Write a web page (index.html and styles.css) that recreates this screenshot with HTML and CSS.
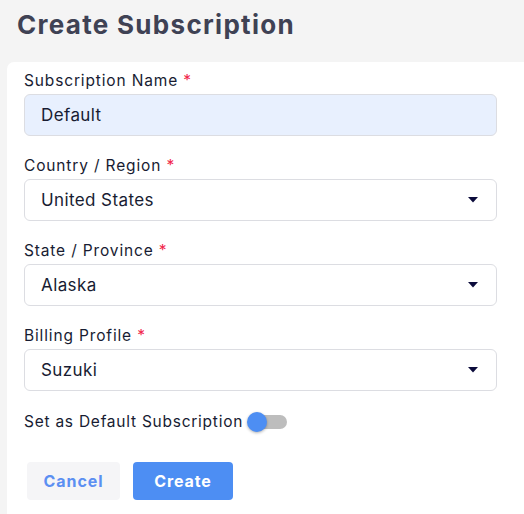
FILE: index.html
```html
<!DOCTYPE html>
<html>
<head>
<meta charset="utf-8">
<link rel="stylesheet" href="styles.css">
</head>
<body>
<header class="page-head">
  <h1 class="title">Create Subscription</h1>
</header>
<main class="card">
  <div class="field">
    <label class="label">Subscription Name <span class="req">*</span></label>
    <div class="input filled">Default</div>
  </div>
  <div class="field">
    <label class="label">Country / Region <span class="req">*</span></label>
    <div class="input select"><span>United States</span><svg class="caret" width="10" height="6" viewBox="0 0 10 6"><path d="M0 0H10L5 5.5Z" fill="#0b0b3b"/></svg></div>
  </div>
  <div class="field">
    <label class="label">State / Province <span class="req">*</span></label>
    <div class="input select"><span>Alaska</span><svg class="caret" width="10" height="6" viewBox="0 0 10 6"><path d="M0 0H10L5 5.5Z" fill="#0b0b3b"/></svg></div>
  </div>
  <div class="field">
    <label class="label">Billing Profile <span class="req">*</span></label>
    <div class="input select"><span>Suzuki</span><svg class="caret" width="10" height="6" viewBox="0 0 10 6"><path d="M0 0H10L5 5.5Z" fill="#0b0b3b"/></svg></div>
  </div>
  <div class="toggle-row">
    <span class="label toggle-label">Set as Default Subscription</span>
    <span class="switch"><span class="track"></span><span class="knob"></span></span>
  </div>
  <div class="actions">
    <button class="btn btn-cancel">Cancel</button>
    <button class="btn btn-create">Create</button>
  </div>
</main>
</body>
</html>
```
FILE: styles.css
```css
html, body {
  margin: 0;
  padding: 0;
}
body {
  background: #f4f4f4;
  font-family: Inter, "Open Sans", sans-serif;
  color: #181c32;
  width: 524px;
  height: 514px;
  overflow: hidden;
}
.page-head {
  height: 62px;
  padding-left: 17px;
  box-sizing: border-box;
}
.title {
  margin: 0;
  padding-top: 7px;
  font-size: 26px;
  line-height: 36px;
  font-weight: 700;
  color: #3f4254;
  letter-spacing: 1.3px;
}
.card {
  margin-left: 7px;
  background: #fff;
  border-top-left-radius: 7px;
  padding: 8px 27px 20px 17px;
  height: 460px;
  box-sizing: border-box;
}
.field {
  display: flex;
  flex-direction: column;
  margin-bottom: 19px;
}
.label {
  font-size: 15.5px;
  line-height: 22px;
  letter-spacing: 0.85px;
  color: #181c32;
  margin-bottom: 2px;
}
.req {
  color: #f1254a;
}
.input {
  height: 42px;
  box-sizing: border-box;
  border: 1px solid #dcdde2;
  border-radius: 6px;
  padding: 0 16px;
  display: flex;
  align-items: center;
  font-size: 17px;
  letter-spacing: 0.4px;
  color: #181c32;
}
.input.filled {
  background: #e8f0fe;
}
.select {
  justify-content: space-between;
}
.caret {
  margin-right: 2px;
}
.toggle-row {
  display: flex;
  align-items: center;
  height: 24px;
  margin-top: 3px;
}
.toggle-row .toggle-label {
  margin: 0;
  letter-spacing: 0.75px;
}
.switch {
  position: relative;
  width: 40px;
  height: 20px;
  margin-left: 4px;
}
.track {
  position: absolute;
  left: 4px;
  top: 3px;
  width: 36px;
  height: 14px;
  border-radius: 7px;
  background: #bdbdbd;
}
.knob {
  position: absolute;
  left: 0;
  top: 0;
  width: 20px;
  height: 20px;
  border-radius: 50%;
  background: #4d8ef3;
  box-shadow: 0 1px 3px rgba(0,0,0,0.3);
}
.actions {
  display: flex;
  gap: 13px;
  margin-top: 28px;
  padding-left: 3px;
}
.btn {
  height: 38px;
  border: none;
  border-radius: 4px;
  font-family: Inter, sans-serif;
  font-weight: 700;
  font-size: 16px;
  letter-spacing: 0.9px;
  cursor: pointer;
}
.btn-cancel {
  width: 93px;
  background: #f5f5f7;
  color: #5b8ff2;
}
.btn-create {
  width: 100px;
  background: #4d8ef3;
  color: #fff;
}
```
